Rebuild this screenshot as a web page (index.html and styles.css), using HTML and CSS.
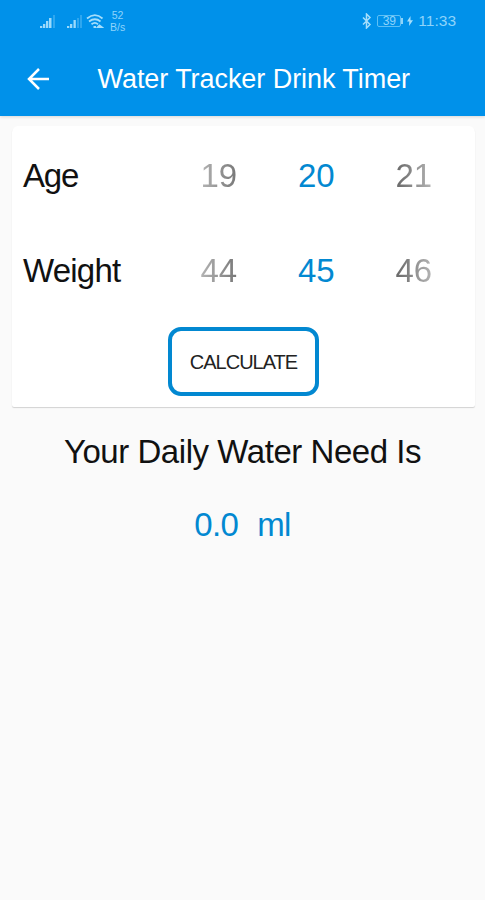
FILE: index.html
```html
<!DOCTYPE html>
<html lang="en">
<head>
  <meta charset="UTF-8">
  <meta name="viewport" content="width=device-width, initial-scale=1.0">
  <title>Water Tracker Drink Timer</title>
  <link rel="stylesheet" href="styles.css">
</head>
<body>

<header class="app-header">
  <div class="status-bar">
    <div class="status-left">
      <svg class="signal" width="16" height="13" viewBox="0 0 16 13">
        <path d="M0 11h2.300v2H0zM3 9h2.300v4H3zM6 6h2.300v7H6zM9 3h2.500v10H9z"/>
        <path d="M13 0h2v13h-2z" opacity=".3"/>
      </svg>
      <svg class="signal" width="16" height="13" viewBox="0 0 16 13">
        <path d="M0 11h2.300v2H0zM3 9h2.300v4H3zM6.500 5h2.300v8H6.500z"/>
        <path d="M10 3h2v10h-2zM13 0h2v13h-2z" opacity=".3"/>
      </svg>
      <svg class="wifi" width="18" height="15" viewBox="0 0 18 15">
        <path d="M1 4.500Q9-2.200 16.500 4.500M3 7.500Q9 3 14.500 7.500M5.500 10.300Q9 7.500 12 10.300"/>
        <path d="M7.500 13h2.500M12 13l1.500-1.500 2 1.500z"/>
      </svg>
      <div class="net-speed"><span>52</span><span>B/s</span></div>
    </div>
    <div class="status-right">
      <svg class="bluetooth" width="10" height="16" viewBox="0 0 10 16">
        <path d="M1 4.500l7 7-3.500 3.500V1L8 4.500l-7 7"/>
      </svg>
      <div class="battery">39</div>
      <svg class="bolt" width="6" height="10" viewBox="0 0 6 10">
        <path d="M3.500 0L0 5.500h2.300L2 10l4-5.700H3.500z"/>
      </svg>
      <span class="clock">11:33</span>
    </div>
  </div>
  <div class="toolbar">
    <svg class="back" width="24" height="24" viewBox="0 0 24 24">
      <path d="M22 12H2.500M12 2L2 12l10 10"/>
    </svg>
    <h1 class="title">Water Tracker Drink Timer</h1>
  </div>
</header>

<main>
  <section class="card">
    <div class="row">
      <span class="label label-age">Age</span>
      <div class="picker">
        <span class="prev">19</span>
        <span class="current">20</span>
        <span class="next">21</span>
      </div>
    </div>
    <div class="row">
      <span class="label">Weight</span>
      <div class="picker">
        <span class="prev">44</span>
        <span class="current">45</span>
        <span class="next">46</span>
      </div>
    </div>
    <button class="calculate">CALCULATE</button>
  </section>

  <h2 class="need-title">Your Daily Water Need Is</h2>
  <p class="need-value"><span>0.0</span><span>ml</span></p>
</main>

</body>
</html>
```
FILE: styles.css
```css
* {
  box-sizing: border-box;
}
body {
  margin: 0;
  min-height: 900px;
  background: #fafafa;
  color: #111;
  font-family: "Liberation Sans", Arial, sans-serif;
}

/* header */
.app-header {
  height: 116px;
  background: #0091ea;
  color: #fff;
  box-shadow: 0 1px 3px rgba(0, 0, 0, 0.14);
}
.status-bar {
  display: flex;
  justify-content: space-between;
  height: 42px;
  padding: 0 29px 0 40px;
  color: #8ed4fa;
}
.status-left, .status-right {
  display: flex;
  align-items: center;
}
.signal {
  margin-right: 11px;
  fill: #9bdafb;
}
.signal + .wifi {
  margin-left: -8px;
}
.wifi {
  fill: none;
  stroke: #a5defb;
  stroke-width: 1.8;
}
.net-speed {
  display: flex;
  flex-direction: column;
  align-items: center;
  margin-left: 6px;
  font-size: 10.5px;
  line-height: 12px;
}
.bluetooth {
  margin-right: 5px;
  fill: none;
  stroke: #a5defb;
  stroke-width: 1.5;
}
.battery {
  width: 24px;
  height: 12px;
  border: 1px solid #5fc0f5;
  border-radius: 2px;
  font-size: 12px;
  line-height: 10px;
  text-align: center;
}
.battery::after {
  content: "";
  float: right;
  width: 2px;
  height: 6px;
  margin: 2px -3px 0 0;
  background: #8ed4fa;
}
.bolt {
  margin: 0 5px 0 6px;
  fill: #a5defb;
}
.clock {
  font-size: 15.5px;
}
.toolbar {
  display: flex;
  align-items: center;
  height: 73px;
  padding-left: 27px;
}
.back {
  fill: none;
  stroke: #fff;
  stroke-width: 2.5;
}
.title {
  margin: 2px 0 0 46.500px;
  font-size: 27px;
  font-weight: normal;
  letter-spacing: -0.06px;
  white-space: nowrap;
}

/* card */
.card {
  display: flex;
  flex-direction: column;
  width: 463px;
  height: 281px;
  margin: 10px 0 0 12px;
  padding-top: 2px;
  border-radius: 6px 6px 2px 2px;
  background: #fff;
  box-shadow: 0 1px 1px rgba(0, 0, 0, 0.16);
}
.row {
  display: flex;
  align-items: center;
  height: 95px;
  padding-left: 11px;
  font-size: 33px;
}
.label {
  width: 147px;
  letter-spacing: -0.8px;
}
.label-age {
  letter-spacing: -1.2px;
}
.picker {
  display: grid;
  grid-template-columns: repeat(3, 97.5px);
  text-align: center;
}
.picker span {
  justify-self: center;
}
.prev {
  background: linear-gradient(to right, #b5b5b5, #777);
  background-clip: text;
  color: transparent;
}
.current {
  color: #0288d1;
}
.next {
  background: linear-gradient(to right, #666, #b5b5b5);
  background-clip: text;
  color: transparent;
}
.calculate {
  align-self: center;
  width: 151px;
  height: 69px;
  margin-top: 9px;
  padding: 2px 0 0;
  border: 4px solid #0288d1;
  border-radius: 13px;
  background: #fff;
  color: #222;
  font-family: inherit;
  font-size: 20px;
  letter-spacing: -1px;
}

/* result */
.need-title {
  margin: 26px 0 0;
  font-size: 33px;
  font-weight: normal;
  letter-spacing: -0.45px;
  line-height: 38px;
  text-align: center;
}
.need-value {
  display: flex;
  justify-content: center;
  gap: 19px;
  margin: 35px 0 0;
  color: #0288d1;
  font-size: 33px;
  letter-spacing: -0.6px;
  line-height: 38px;
}
```
